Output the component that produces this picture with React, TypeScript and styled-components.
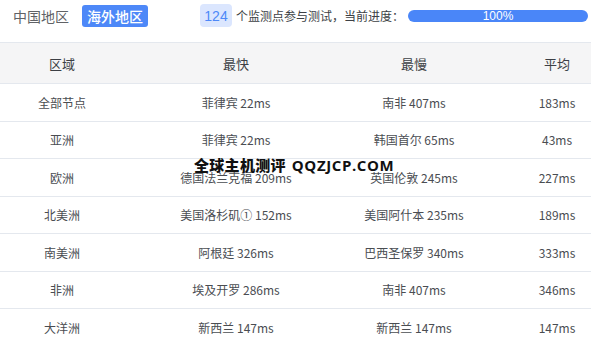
import React from "react";
import styled, { createGlobalStyle } from "styled-components";

const GlobalStyle = createGlobalStyle`
  html, body {
    margin: 0;
    padding: 0;
    background: #fff;
    font-family: "Noto Sans CJK SC", "Noto Sans", sans-serif;
    overflow: hidden;
  }
`;

const Page = styled.div`
  position: relative;
  width: 591px;
  height: 342px;
  overflow: hidden;
  background: #fff;
`;

const TopBar = styled.div`
  display: flex;
  align-items: center;
  height: 42px;
  padding: 0 0 11px 13px;
  box-sizing: border-box;
`;

const Tab = styled.div<{ $active?: boolean }>`
  flex-shrink: 0;
  white-space: nowrap;
  font-size: 14px;
  line-height: 22px;
  height: 22px;
  padding: 0 ${({ $active }) => ($active ? "5px" : "0")};
  margin-right: ${({ $active }) => ($active ? "52px" : "13px")};
  border-radius: 3px;
  color: ${({ $active }) => ($active ? "#fff" : "#606266")};
  background: ${({ $active }) => ($active ? "#4d88f8" : "transparent")};
  font-weight: ${({ $active }) => ($active ? 500 : 400)};
`;

const Badge = styled.span`
  flex-shrink: 0;
  display: inline-flex;
  align-items: center;
  justify-content: center;
  width: 32px;
  height: 23px;
  border-radius: 4px;
  background: #dbe6fe;
  color: #4d88f8;
  font-family: "Liberation Sans", Arial, sans-serif;
  font-size: 14px;
  margin-right: 4px;
`;

const Caption = styled.span`
  flex-shrink: 0;
  font-size: 12px;
  color: #3c3f45;
  margin-right: 4px;
  white-space: nowrap;
`;

const Progress = styled.div`
  flex-shrink: 0;
  width: 180px;
  height: 12px;
  border-radius: 6px;
  background: #4a86f8;
  color: #fff;
  font-family: "Liberation Sans", Arial, sans-serif;
  font-size: 12px;
  line-height: 12px;
  text-align: center;
  margin-top: 1px;
`;

const Table = styled.div`
  width: 634px;
  border-top: 1px solid #e4e8ee;
`;

const Row = styled.div<{ $head?: boolean }>`
  display: grid;
  grid-template-columns: 124px 224px 132px 154px;
  height: ${({ $head }) => ($head ? "40px" : "36.5px")};
  align-items: center;
  background: ${({ $head }) => ($head ? "#f5f5f6" : "#fff")};
  border-bottom: 1px solid #e4e8ee;
`;

const Cell = styled.div<{ $head?: boolean }>`
  text-align: center;
  font-size: ${({ $head }) => ($head ? "13px" : "12px")};
  color: ${({ $head }) => ($head ? "#3c3f45" : "#4a4d52")};
  white-space: nowrap;
`;

const Watermark = styled.div`
  position: absolute;
  left: 194px;
  top: 155px;
  font-family: "Noto Sans CJK SC", sans-serif;
  font-weight: 900;
  font-size: 15px;
  line-height: 20px;
  color: #111;
  white-space: nowrap;
  letter-spacing: 0.3px;

  span {
    font-family: "Open Sans", "DejaVu Sans", sans-serif;
    font-weight: 700;
    letter-spacing: 0.6px;
    margin-left: 6px;
  }
`;

const rows = [
  ["全部节点", "菲律宾 22ms", "南非 407ms", "183ms"],
  ["亚洲", "菲律宾 22ms", "韩国首尔 65ms", "43ms"],
  ["欧洲", "德国法兰克福 209ms", "英国伦敦 245ms", "227ms"],
  ["北美洲", "美国洛杉矶① 152ms", "美国阿什本 235ms", "189ms"],
  ["南美洲", "阿根廷 326ms", "巴西圣保罗 340ms", "333ms"],
  ["非洲", "埃及开罗 286ms", "南非 407ms", "346ms"],
  ["大洋洲", "新西兰 147ms", "新西兰 147ms", "147ms"],
];

export default function App() {
  return (
    <Page>
      <GlobalStyle />
      <TopBar>
        <Tab>中国地区</Tab>
        <Tab $active>海外地区</Tab>
        <Badge>124</Badge>
        <Caption>个监测点参与测试，当前进度：</Caption>
        <Progress>100%</Progress>
      </TopBar>
      <Table>
        <Row $head>
          <Cell $head>区域</Cell>
          <Cell $head>最快</Cell>
          <Cell $head>最慢</Cell>
          <Cell $head>平均</Cell>
        </Row>
        {rows.map((r) => (
          <Row key={r[0]}>
            {r.map((c, i) => (
              <Cell key={i}>{c}</Cell>
            ))}
          </Row>
        ))}
      </Table>
      <Watermark>
        全球主机测评<span>QQZJCP.COM</span>
      </Watermark>
    </Page>
  );
}
